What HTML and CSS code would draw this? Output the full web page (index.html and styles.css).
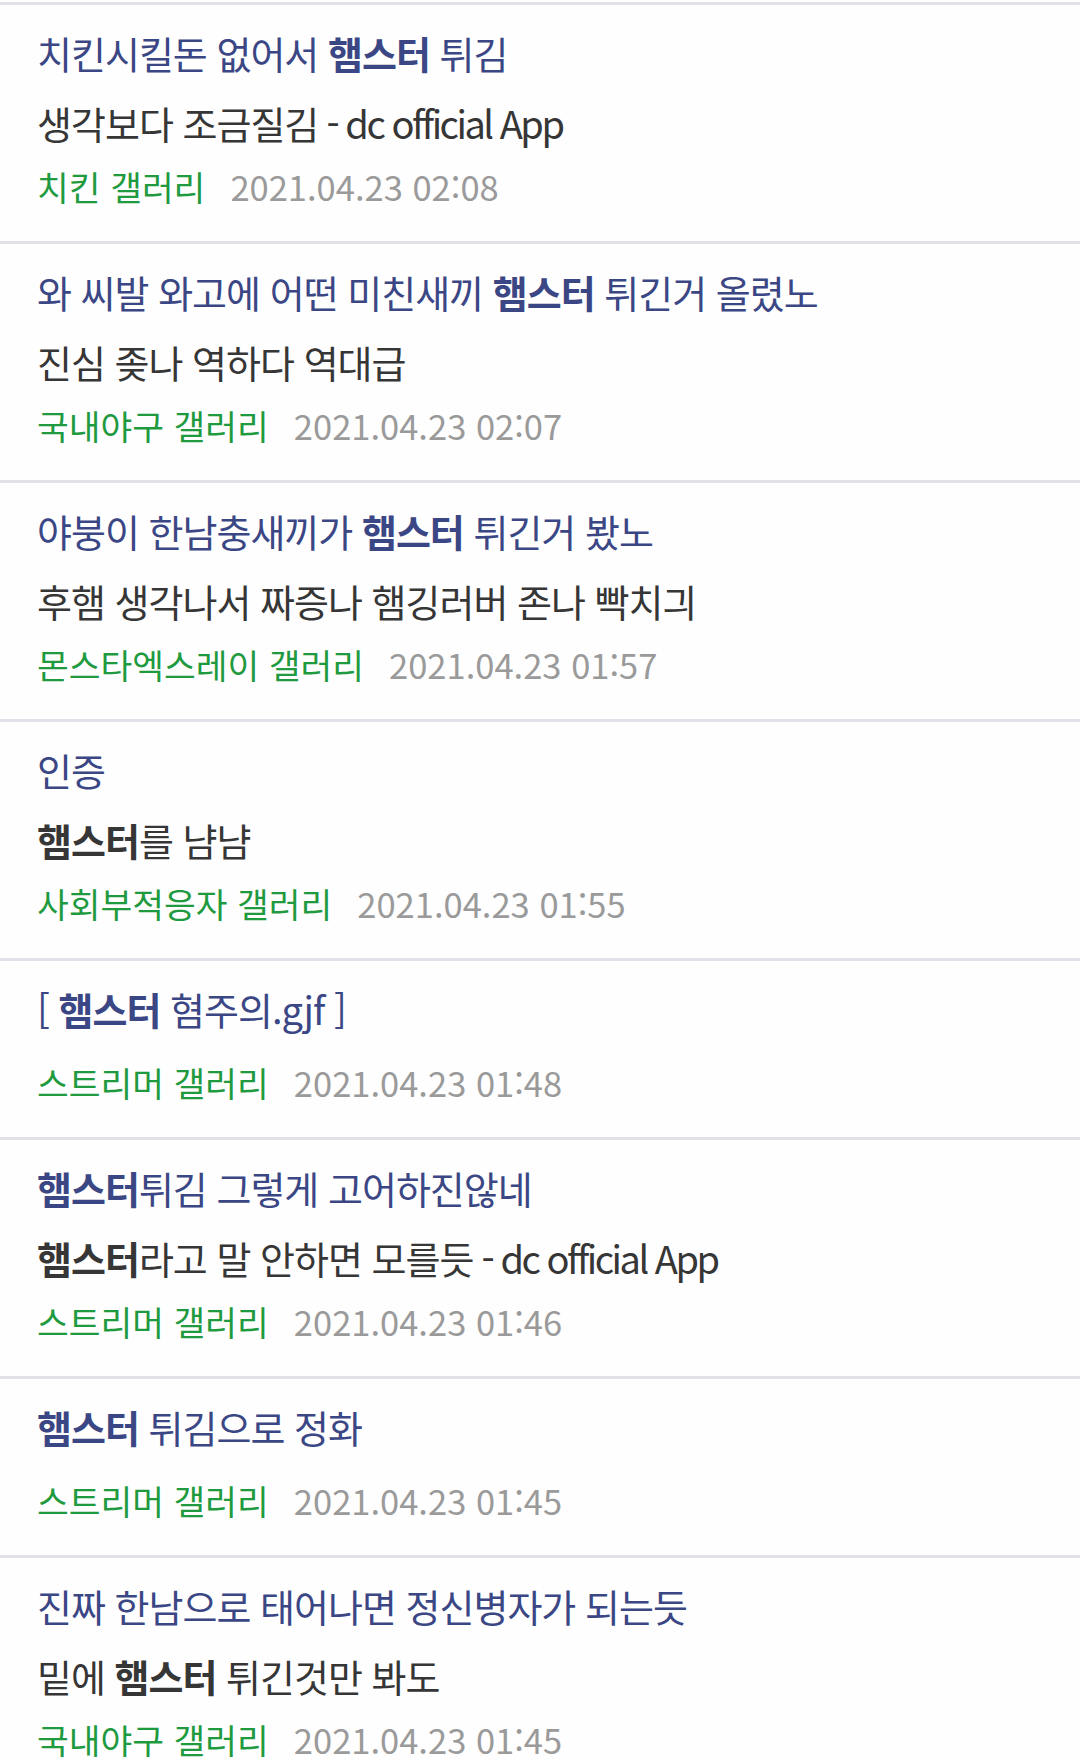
FILE: index.html
```html
<!DOCTYPE html>
<html lang="ko">
<head>
  <meta charset="UTF-8">
  <meta name="viewport" content="width=device-width, initial-scale=1.0">
  <title>검색 결과 - 햄스터</title>
  <link rel="stylesheet" href="styles.css">
</head>
<body>
  <ul class="post-list">
    <li class="post">
      <div class="post-title">치킨시킬돈 없어서 <b>햄스터</b> 튀김</div>
      <div class="post-body">생각보다 조금질김<span class="app-sig"> - dc official App</span></div>
      <div class="post-meta"><span class="gallery">치킨 갤러리</span><span class="date">2021.04.23 02:08</span></div>
    </li>
    <li class="post">
      <div class="post-title">와 씨발 와고에 어떤 미친새끼 <b>햄스터</b> 튀긴거 올렸노</div>
      <div class="post-body">진심 좆나 역하다 역대급</div>
      <div class="post-meta"><span class="gallery">국내야구 갤러리</span><span class="date">2021.04.23 02:07</span></div>
    </li>
    <li class="post">
      <div class="post-title">야붕이 한남충새끼가 <b>햄스터</b> 튀긴거 봤노</div>
      <div class="post-body">후햄 생각나서 짜증나 햄깅러버 존나 빡치긔</div>
      <div class="post-meta"><span class="gallery">몬스타엑스레이 갤러리</span><span class="date">2021.04.23 01:57</span></div>
    </li>
    <li class="post">
      <div class="post-title">인증</div>
      <div class="post-body"><b>햄스터</b>를 냠냠</div>
      <div class="post-meta"><span class="gallery">사회부적응자 갤러리</span><span class="date">2021.04.23 01:55</span></div>
    </li>
    <li class="post">
      <div class="post-title">[ <b>햄스터</b> 혐주의.gjf ]</div>
      <div class="post-meta"><span class="gallery">스트리머 갤러리</span><span class="date">2021.04.23 01:48</span></div>
    </li>
    <li class="post">
      <div class="post-title"><b>햄스터</b>튀김 그렇게 고어하진않네</div>
      <div class="post-body"><b>햄스터</b>라고 말 안하면 모를듯<span class="app-sig"> - dc official App</span></div>
      <div class="post-meta"><span class="gallery">스트리머 갤러리</span><span class="date">2021.04.23 01:46</span></div>
    </li>
    <li class="post">
      <div class="post-title"><b>햄스터</b> 튀김으로 정화</div>
      <div class="post-meta"><span class="gallery">스트리머 갤러리</span><span class="date">2021.04.23 01:45</span></div>
    </li>
    <li class="post">
      <div class="post-title">진짜 한남으로 태어나면 정신병자가 되는듯</div>
      <div class="post-body">밑에 <b>햄스터</b> 튀긴것만 봐도</div>
      <div class="post-meta"><span class="gallery">국내야구 갤러리</span><span class="date">2021.04.23 01:45</span></div>
    </li>
  </ul>
</body>
</html>
```

FILE: styles.css
```css
html, body {
  margin: 0;
  padding: 0;
  background: #fefefe;
}

body {
  font-family: "Noto Sans CJK KR", "Noto Sans", sans-serif;
  width: 1080px;
  height: 1760px;
  overflow: hidden;
}

.post-list {
  list-style: none;
  margin: 0;
  padding: 2px 0 0;
}

.post {
  display: flex;
  flex-direction: column;
  border-top: 3px solid #e1e2e9;
  padding: 18px 37px 30px;
}

.post-title {
  font-size: 38px;
  line-height: 60px;
  letter-spacing: -1px;
  color: #3b4785;
  margin-bottom: 10px;
  white-space: nowrap;
}

.post-title b,
.post-body b {
  font-weight: 700;
}

.post-body {
  font-size: 38px;
  line-height: 60px;
  letter-spacing: -1px;
  color: #363636;
  white-space: nowrap;
}

/* app signature is set tighter than the Korean text */
.app-sig {
  letter-spacing: -2.5px;
}

.post-meta {
  display: flex;
  gap: 25px;
  margin-top: 8px;
  font-size: 34.5px;
  line-height: 50px;
  white-space: nowrap;
}

.gallery {
  color: #1f9a3f;
}

.date {
  color: #9a9a9a;
}
```
